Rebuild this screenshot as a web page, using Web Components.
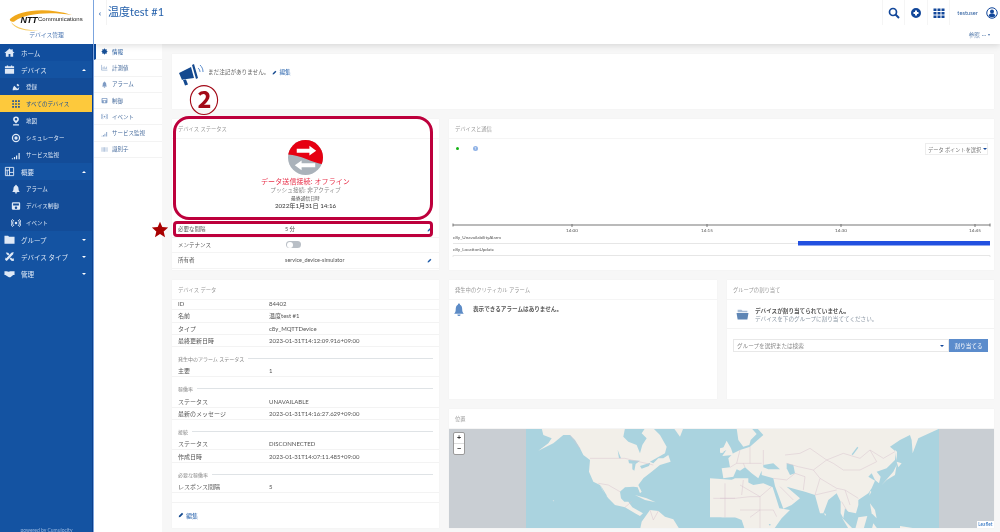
<!doctype html>
<html lang="ja">
  <head>
    <meta charset="UTF-8" />
    <title>デバイス管理</title>
    <style>
      html, body { margin: 0; height: 100%; overflow: hidden; background: #f7f7f7; }
      body { font-family: Lato, "Noto Sans CJK JP", sans-serif; color: #444; }
    </style>
  </head>
  <body>
    <device-page></device-page>
    <script>
      const ICONS = {
        home: '<path fill="currentColor" d="M12 3 1 13h3v8h6v-6h4v6h6v-8h3l-4-3.6V5h-3v1.7z"/>',
        device: '<path fill="currentColor" d="M6 3h3v2h6V3h3v2h4v4H2V5h4zM2 11h20v10H2z"/>',
        satellite: '<path fill="currentColor" d="M4 20c0-4 1-8 4-11l7 7c-3 3-7 4-11 4zM13 7l3-3 4 4-3 3zM10 20l8-1 2-7-3 3z"/>',
        grid: '<path fill="currentColor" d="M3 3h4v4H3zM10 3h4v4h-4zM17 3h4v4h-4zM3 10h4v4H3zM10 10h4v4h-4zM17 10h4v4h-4zM3 17h4v4H3zM10 17h4v4h-4zM17 17h4v4h-4z"/>',
        pin: '<path fill="currentColor" fill-rule="evenodd" d="M12 1a7 7 0 0 1 7 7c0 4-4 7-7 10-3-3-7-6-7-10a7 7 0 0 1 7-7zm0 4a3 3 0 1 0 0 6 3 3 0 0 0 0-6zM5 20h14v3H5z"/>',
        target: '<path fill="currentColor" fill-rule="evenodd" d="M12 2a10 10 0 1 1 0 20 10 10 0 0 1 0-20zm0 3a7 7 0 1 0 0 14 7 7 0 0 0 0-14zm0 3a4 4 0 1 1 0 8 4 4 0 0 1 0-8z"/>',
        signal: '<path fill="currentColor" d="M2 20h3v2H2zM7 17h3v5H7zM12 13h3v9h-3zM18 7h3v15h-3z"/>',
        panels: '<path fill="none" stroke="currentColor" stroke-width="2" d="M3 3h18v18H3zM3 9h9M12 3v18M12 14h9M7 9v12"/>',
        bell: '<path fill="currentColor" d="M12 2c1 0 2 1 2 2 3 1 4 4 4 7 0 4 1 6 3 8H3c2-2 3-4 3-8 0-3 1-6 4-7 0-1 1-2 2-2zM9 20h6a3 3 0 0 1-6 0z"/>',
        control: '<path fill="currentColor" fill-rule="evenodd" d="M5 3h14a3 3 0 0 1 3 3v12a3 3 0 0 1-3 3H5a3 3 0 0 1-3-3V6a3 3 0 0 1 3-3zm0 3v5h14V6zm7 7a3 3 0 1 0 0 6 3 3 0 0 0 0-6z"/>',
        event: '<path fill="none" stroke="currentColor" stroke-width="2.4" d="M7 5c-4 4-4 10 0 14M4 3c-5 5-5 13 0 18M17 5c4 4 4 10 0 14M20 3c5 5 5 13 0 18"/><circle cx="12" cy="12" r="3" fill="currentColor"/>',
        folder: '<path fill="currentColor" d="M1 4h8l2 2h12v15H1z"/>',
        tray: '<path fill="#a9bdd6" d="M3 3h7l2 2h9v3H3z"/><path fill="currentColor" d="M1 9h22l-2 12H3z"/>',
        tools: '<path fill="currentColor" d="M2 19 16 4l5-2-1 5L6 22zM4 3l5 1 3 3-3 3-3-3zM15 14l3 3 3-1 1 5-5 1-5-5zM3 14l2 2-2 2z"/>',
        hands: '<path fill="currentColor" d="M1 7h5l4 1 4-1 4 0h5v8h-3l-6 5c-2 1-3 0-5-1l-6-4H1z"/>',
        pencil: '<path fill="currentColor" d="M3 21l1-6L16 3l5 5L9 20z"/>',
        info: '<path fill="currentColor" d="M12 1l3 4 5-1-1 5 4 3-4 3 1 5-5-1-3 4-3-4-5 1 1-5-4-3 4-3-1-5 5 1z"/>',
        chart: '<path fill="none" stroke="currentColor" stroke-width="2" d="M2 3v18h20M7 17v-6M11 17V8M15 17v-4M19 17V9"/>',
        idlist: '<path fill="currentColor" d="M2 4h3v16H2zM7 4h2v16H7zM11 4h3v16h-3zM16 4h2v16h-2zM20 4h2v16h-2z" opacity=".7"/>',
      };

      // small base so each element only gives its css and markup
      class Box extends HTMLElement {
        connectedCallback() {
          if (this.shadowRoot) return;
          this.attachShadow({ mode: "open" });
          this.shadowRoot.innerHTML = `<style>${this.css()}</style>${this.markup()}`;
        }
        css() { return ":host{display:block}"; }
        markup() { return "<slot></slot>"; }
        attr(name, fallback = "") { return this.getAttribute(name) ?? fallback; }
      }

      class AppIcon extends Box {
        css() {
          return `:host{display:inline-flex;width:${this.attr("size", 10)}px;height:${this.attr("size", 10)}px;flex:none}
            svg{width:100%;height:100%;display:block}`;
        }
        markup() {
          return `<svg viewBox="0 0 24 24">${ICONS[this.attr("name")] || ""}</svg>`;
        }
      }

      class NavRow extends Box {
        css() {
          return `:host{display:flex;align-items:center;height:17px;box-sizing:border-box;color:#dfe9f6;background:#1453a2;
              padding-left:${this.hasAttribute("sub") ? 11 : 4}px;font-size:${this.hasAttribute("sub") ? 5.5 : 6.5}px}
            :host([sub]){background:#134c98}
            :host([first]){background:#114e9e}
            :host([active]){background:#fdc93c;color:#1a4f9a}
            app-icon{margin-right:${this.hasAttribute("sub") ? 5 : 6}px}
            span{flex:1;white-space:nowrap}
            i{font-style:normal;width:0;height:0;margin-right:6px;border-left:2px solid transparent;border-right:2px solid transparent}
            i.up{border-bottom:2px solid #fff}
            i.down{border-top:2px solid #fff}`;
        }
        markup() {
          const chev = this.attr("chev");
          const size = this.hasAttribute("sub") ? 10 : 11;
          return `<app-icon name="${this.attr("icon")}" size="${size}"></app-icon><span><slot></slot></span>${chev ? `<i class="${chev}"></i>` : ""}`;
        }
      }

      class SideNav extends Box {
        css() {
          return `:host{display:flex;flex-direction:column;width:94px;height:532px;flex:none;background:#1453a2;
              border-right:1px solid #7ba4de;box-sizing:border-box;position:relative;overflow:hidden;z-index:3}
            .brand{height:44px;background:#fff;display:flex;flex-direction:column;align-items:center}
            .logo{position:relative;width:76px;height:22px;margin-top:9px;left:-1px}
            .logo svg{position:absolute;inset:0;width:100%;height:100%;overflow:visible}
            .logo b{position:absolute;left:13px;top:5.5px;font:italic 900 9px "Liberation Sans",sans-serif;color:#111;letter-spacing:-.2px}
            .logo em{position:absolute;left:30.5px;top:7px;font:normal 6px "Liberation Sans",sans-serif;color:#222}
            .app{font-size:5.8px;color:#4d78b3;line-height:8px}
            nav{flex:1;border-right:1px solid #0b3f8c}
            .foot{position:absolute;left:0;right:0;top:527px;text-align:center;font-size:5px;color:#9dbbe3}`;
        }
        markup() {
          return `<div class="brand">
              <div class="logo">
                <svg viewBox="0 0 76 22"><path fill="#f0a81c" d="M2 10C10 2 36-3 64 6 40 2 16 5 7 12c-2 2-6 0-5-2z"/><path fill="#f6c95a" d="M3 13c6 7 20 9 30 8-12 2-26 0-30-8z"/></svg>
                <b>NTT</b><em>Communications</em>
              </div>
              <div class="app">デバイス管理</div>
            </div>
            <nav><slot></slot></nav>
            <div class="foot">powered by Cumulocity</div>`;
        }
      }

      class TabRow extends Box {
        css() {
          return `:host{display:flex;align-items:center;height:16.3px;box-sizing:border-box;padding-left:7px;gap:4px;font-size:5.5px;color:#4b6f9f;border-bottom:1px solid #f3f3f3}
            :host([active]){border-left:2px solid #0d4a9c;padding-left:5px;color:#174f96}
            app-icon{color:#7f9cc4}
            :host([active]) app-icon{color:#174f96}`;
        }
        markup() {
          return `<app-icon name="${this.attr("icon")}" size="7"></app-icon><slot></slot>`;
        }
      }

      class TopBar extends Box {
        css() {
          return `:host{display:block;background:#fff;box-shadow:0 2px 6px rgba(0,0,0,.12);position:relative;z-index:2}
            .bar{display:flex;align-items:center;height:25px;box-sizing:border-box}
            .back{width:12px;height:25px;display:flex;align-items:center;justify-content:center;border-right:1px solid #f3f3f3;font-size:8px;font-weight:700;color:#2a5fa8;box-sizing:content-box}
            h1{flex:1;margin:0 0 0 1px;font-size:11px;font-weight:400;color:#2460ab;white-space:nowrap;position:relative;top:-1.5px}
            .act{width:21.5px;height:25px;display:flex;align-items:center;justify-content:center;border-left:1px solid #f5f5f5;color:#12479a}
            .act svg{width:12px;height:12px}
            .user{font-size:5.8px;color:#2e5f9f;padding:0 6px 0 7px;border-left:1px solid #f5f5f5;height:25px;display:flex;align-items:center}
            .me{width:15px;height:25px;display:flex;align-items:center;color:#12479a;margin-right:1px}
            .me svg{width:12px;height:12px;margin-left:2px;flex:none}
            .sub{height:19px;display:flex;justify-content:flex-end;align-items:center;padding-right:10px;font-size:5.5px;color:#5a7fae;gap:2px}
            .sub i{border-top:2px solid #4a72a8;border-left:1.5px solid transparent;border-right:1.5px solid transparent}`;
        }
        markup() {
          return `<div class="bar">
              <div class="back">‹</div>
              <h1><slot></slot></h1>
              <div class="act"><svg viewBox="0 0 24 24"><circle cx="10" cy="10" r="7" fill="none" stroke="currentColor" stroke-width="3.4"/><path stroke="currentColor" stroke-width="4" d="m15 15 7 7"/></svg></div>
              <div class="act"><svg viewBox="0 0 24 24"><path fill="currentColor" fill-rule="evenodd" d="M12 2a10 10 0 1 1 0 20 10 10 0 0 1 0-20zm-2 5v3H7v4h3v3h4v-3h3v-4h-3V7z"/></svg></div>
              <div class="act"><svg viewBox="0 0 24 24"><path fill="currentColor" d="M1 3h6v5H1zM9 3h6v5H9zM17 3h6v5h-6zM1 10h6v5H1zM9 10h6v5H9zM17 10h6v5h-6zM1 17h6v5H1zM9 17h6v5H9zM17 17h6v5h-6z"/></svg></div>
              <div class="user">testuser</div>
              <div class="me"><svg viewBox="0 0 24 24"><circle cx="12" cy="12" r="10.5" fill="none" stroke="currentColor" stroke-width="2"/><circle cx="12" cy="9" r="4" fill="currentColor"/><path fill="currentColor" d="M5 18c1-4 4-5 7-5s6 1 7 5c-2 3-12 3-14 0z"/></svg></div>
            </div>
            <div class="sub">参照 <span>···</span><i></i></div>`;
        }
      }

      class DashCard extends Box {
        css() {
          return `:host{display:flex;flex-direction:column;background:#fff;min-width:0;overflow:hidden;box-shadow:0 0 1px rgba(0,0,0,.06)}
            header{height:20px;flex:none;display:flex;align-items:center;padding-left:6px;font-size:5.3px;color:#9a9a9a;border-bottom:1px solid #f5f5f5;box-sizing:border-box}
            .body{flex:1;display:flex;flex-direction:column;min-height:0;position:relative}`;
        }
        markup() {
          const t = this.attr("heading");
          return `${t ? `<header>${t}</header>` : ""}<div class="body"><slot></slot></div>`;
        }
      }

      class DataRow extends Box {
        css() {
          return `:host{display:grid;grid-template-columns:91px 1fr;height:12.3px;align-items:center;box-sizing:border-box;padding-left:6px;font-size:6px;color:#555;border-bottom:1px solid #f3f3f3;white-space:nowrap}`;
        }
        markup() {
          return `<span>${this.attr("label")}</span><span><slot></slot></span>`;
        }
      }

      class DataSection extends Box {
        css() {
          return `:host{display:flex;align-items:center;gap:4px;height:18px;box-sizing:border-box;padding:5px 6px 0 6px;font-size:5px;color:#888;white-space:nowrap}
            i{flex:1;height:1px;background:#dfe3e6}`;
        }
        markup() { return `<span><slot></slot></span><i></i>`; }
      }

      class DeviceStatus extends Box {
        css() {
          return `:host{display:flex;flex-direction:column;align-items:center;height:83px;text-align:center}
            svg{width:35px;height:35px;margin-top:1px}
            .a{font-size:7px;color:#e8314a;margin-top:1px;line-height:10px;letter-spacing:.1px}
            .b{font-size:5.7px;color:#888;line-height:8px}
            .c{font-size:4.8px;color:#555;line-height:7px;margin-top:.5px}
            .d{font-size:6.2px;color:#333;line-height:7px}`;
        }
        markup() {
          return `<svg viewBox="0 0 36 36">
              <defs><clipPath id="c"><circle cx="18" cy="18" r="18"/></clipPath></defs>
              <g clip-path="url(#c)">
                <rect width="36" height="36" fill="#aab2ba"/>
                <path fill="#e60012" d="M0 0h36v25C26 24 12 15 0 15z"/>
              </g>
              <path fill="#fff" d="M9 9h13V6l7 5-7 5v-3H9z"/>
              <path fill="#fff" d="M28 24H14v-3l-7 5 7 5v-3h14z"/>
            </svg>
            <div class="a">データ送信接続: オフライン</div>
            <div class="b">プッシュ接続: 非アクティブ</div>
            <div class="c">最終通信日時</div>
            <div class="d">2022年1月31日 14:16</div>`;
        }
      }

      class InfoRow extends Box {
        css() {
          return `:host{display:grid;grid-template-columns:107px 1fr 12px;align-items:center;height:15.5px;padding-left:6px;font-size:5.5px;color:#555;border-bottom:1px solid #f4f4f4;white-space:nowrap;box-sizing:border-box}
            app-icon{color:#1c5aa8}`;
        }
        markup() {
          return `<span>${this.attr("label")}</span><span><slot></slot></span>${this.hasAttribute("edit") ? '<app-icon name="pencil" size="5"></app-icon>' : ""}`;
        }
      }

      class ToggleOff extends Box {
        css() {
          return `:host{display:block;width:15px;height:7px;border-radius:4px;background:#b9bfc6;position:relative;margin-left:1px}
            i{position:absolute;left:.5px;top:.5px;width:6px;height:6px;border-radius:50%;background:#fff}`;
        }
        markup() { return "<i></i>"; }
      }

      class ChartPanel extends Box {
        css() {
          return `:host{display:flex;flex-direction:column;flex:1}
            .top{display:flex;align-items:flex-start;justify-content:space-between;padding:4px 6px 0 6px;height:21px;box-sizing:border-box}
            .legend{display:flex;align-items:center;gap:14px;padding-top:3px}
            .dot{width:3px;height:3px;background:#16b316;border-radius:50%;margin-left:1px}
            .help{width:5px;height:5px;border-radius:50%;background:#8fb2e6;color:#fff;font-size:4px;line-height:5px;text-align:center}
            .pick{display:flex;align-items:center;gap:2px;width:63px;height:12px;border:1px solid #ededed;box-sizing:border-box;font-size:5.2px;color:#777;padding-left:2px;white-space:nowrap}
            .pick i{border-top:2.5px solid #12479a;border-left:2px solid transparent;border-right:2px solid transparent}
            svg{display:block;width:545px;height:100px}
            text{font:4.6px Lato,"Liberation Sans",sans-serif;fill:#555}`;
        }
        markup() {
          const ticks = [[123, "14:00"], [258, "14:15"], [392, "14:30"], [526, "14:45"]];
          return `<div class="top"><div class="legend"><div class="dot"></div><div class="help">?</div></div>
              <div class="pick">データ ポイントを選択<i></i></div></div>
            <svg viewBox="0 0 545 100">
              <path stroke="#777" stroke-width="1.2" d="M4 65H541"/>
              <path stroke="#777" d="M4 63.500v3M541 63.500v3"/>
              ${ticks.map(([x, t]) => `<path stroke="#777" d="M${x} 64v3"/><text x="${x}" y="72" text-anchor="middle">${t}</text>`).join("")}
              <text x="4" y="79">c8y_UnavailabilityAlarm</text>
              <path stroke="#e6e6e6" d="M4 83.500H349"/>
              <rect x="349" y="81" width="192" height="4.5" fill="#2250e0"/>
              <text x="4" y="91">c8y_LocationUpdate</text>
              <path fill="none" stroke="#e6e6e6" d="M4 97V95.500H541V97"/>
            </svg>`;
        }
      }

      class WorldMap extends Box {
        css() {
          return `:host{display:block;flex:1;position:relative;overflow:hidden;background:#c9ced3}
            svg{position:absolute;left:0;top:0;width:545px;height:99px}
            .zoom{position:absolute;left:4px;top:3px;width:10px;border:1px solid #9a9a9a;border-radius:2px;background:#fff;font:700 7px/10px "Liberation Sans",sans-serif;text-align:center;color:#333}
            .zoom div{height:10px}
            .zoom div+div{border-top:1px solid #ddd}
            .att{position:absolute;right:0;bottom:0;background:#fff;padding:0 1.5px;font-size:4.8px;line-height:7px;color:#2a6fc0}`;
        }
        markup() {
          // land traced in two pieces, west part from x=525 and east part from x=730 (3x coords)
          return `<svg viewBox="449 429 545 99">
              <rect x="526" y="429" width="413" height="99" fill="#aad3df"/>
              <g transform="translate(525 430) scale(.3333)">
                <g fill="#f2efe9">
                  <path d="M50 -5 55 15 80 25 70 40 40 62 85 40 115 15 135 15 150 30 165 55 175 75 195 90 192 125 205 155 225 165 235 185 250 205 270 225 300 232 330 250 345 258 354 250 322 232 310 215 298 215 288 205 285 185 300 172 325 170 338 172 345 190 350 185 340 165 355 145 380 125 405 105 437 95 430 75 415 85 400 85 385 100 375 95 420 70 425 50 405 15 385 -5 360 -5 350 10 365 25 352 45 345 70 335 45 310 35 295 20 300 -5z"/>
                  <path d="M447 -5 475 -5 465 20z"/>
                  <path d="M330 195 365 205 392 217 360 210z"/>
                  <path d="M345 300 350 275 375 240 400 243 420 260 445 268 465 300z"/>
                  <path d="M587 70 605 32 618 55 625 75 592 78 604 60z"/>
                  <path d="M585 55 597 52 595 68 585 68z"/>
                  <path d="M630 145 600 160 565 205 565 235 590 262 670 262 670 145z"/>
                  <path d="M83 210 88 213 85 214z"/>
                </g>
                <g fill="#aad3df">
                  <path d="M310 90 345 92 332 102 312 100z"/>
                  <path d="M322 100 332 102 328 122 322 118z"/>
                  <path d="M345 108 376 98 372 108 350 116z"/>
                  <path d="M226 165 246 197 240 197z"/>
                  <path d="M278 60 288 85 282 85z"/>
                </g>
              </g>
              <g transform="translate(730 430) scale(.3333)">
                <g fill="#f2efe9">
                  <path d="M20 -5 25 30 40 50 58 45 62 30 80 12 65 -5z"/>
                  <path d="M82 -5 630 -5 565 25 548 70 545 30 540 15 510 30 480 50 498 65 495 90 470 115 440 125 452 140 447 160 435 150 425 130 415 140 435 152 425 175 415 190 385 210 385 225 378 250 355 245 345 235 340 265 332 250 332 215 320 190 295 210 280 250 270 250 255 195 225 185 205 180 170 170 210 205 185 225 160 236 135 168 130 145 95 135 95 122 85 145 65 130 45 112 30 122 20 118 10 140 -20 145 -25 115 0 112 -5 85 10 70 30 60 60 50 100 15z"/>
                  <path d="M15 150 40 150 70 165 100 160 128 172 148 235 180 240 155 265 130 300 45 300 35 270 15 262 -60 262 -60 145z"/>
                  <path d="M455 165 490 125 500 105 495 135 470 150z"/>
                  <path d="M500 95 515 100 505 112z"/>
                  <path d="M495 60 501 65 500 92z"/>
                  <path d="M420 183 424 185 418 197z"/>
                  <path d="M420 220 435 240 440 265 425 250z"/>
                  <path d="M385 262 412 258 400 300 375 300z"/>
                  <path d="M430 280 445 300 425 300z"/>
                  <path d="M335 262 372 300 358 300z"/>
                  <path d="M510 288 560 296 510 300z"/>
                  <path d="M0 135 8 130 8 140z"/>
                  <path d="M282 250 288 252 286 258z"/>
                </g>
                <g fill="#aad3df">
                  <path d="M100 105 130 100 150 118 115 118 100 112z"/>
                  <path d="M170 100 190 105 195 130 180 135 170 115z"/>
                  <path d="M382 50 385 53 368 76 365 73z"/>
                  <path d="M116 282 122 282 120 288z"/>
                </g>
                <g fill="none" stroke="#d9c5cf" stroke-width="1.5">
                  <path d="M165 75 210 70 240 55 290 90 340 70 390 85 420 60 460 85 495 65"/>
                  <path d="M290 90 310 100 340 120 390 120 440 95 420 60"/>
                  <path d="M170 100 205 110 250 120 290 90M195 130 225 140 220 180M250 120 270 145 255 195M270 145 320 175 345 180 385 205M255 195 320 180"/>
                  <path d="M345 180 360 225M335 215 350 240M150 170 190 210M130 145 170 150 195 130"/>
                  <path d="M30 165 90 200 125 170M-30 205 15 205 60 200 90 200 90 240 130 240 140 260M30 240 90 240 90 296M40 150 35 195M90 240 60 262"/>
                  <path d="M0 112 20 100 60 100 95 100M60 50 60 100M100 60 100 105M30 60 20 100M40 100 45 112"/>
                </g>
              </g>
              <g transform="translate(525 430) scale(.3333)" fill="none" stroke="#d9c5cf" stroke-width="1.500">
                <path d="M195 85 300 85 320 90 385 105M135 15 165 55M220 160 250 165 285 185M300 232 320 215M375 240 385 270 400 243M600 160 600 262M565 205 630 205"/>
              </g>
            </svg>
            <div class="zoom"><div>+</div><div>−</div></div>
            <div class="att">Leaflet</div>`;
        }
      }

      class MarkUp extends Box {
        css() {
          return `:host{display:block;position:absolute;inset:0;pointer-events:none;z-index:5}
            .r{position:absolute;box-sizing:border-box;border:3px solid #bd003c}
            .a{left:173px;top:116px;width:260px;height:104px;border-radius:16px}
            .b{left:173px;top:221px;width:260px;height:16px;border-radius:4px}
            .star{position:absolute;left:151px;top:221px;width:18px;height:17px}
            .num{position:absolute;left:186px;top:77px;width:36px;text-align:center;font:700 30px/42px "Noto Sans CJK JP",sans-serif;color:#a30a18}`;
        }
        markup() {
          return `<div class="r a"></div><div class="r b"></div>
            <svg class="star" viewBox="0 0 24 24"><path fill="#a80000" d="m12 1 3.2 7.6 8.3.7-6.3 5.4 1.9 8.1L12 18.5 4.900 22.800l1.900-8.100L.5 9.300l8.300-.7z"/></svg>
            <div class="num">②</div>`;
        }
      }

      class DevicePage extends Box {
        css() {
          return `:host{display:flex;width:1000px;height:532px;position:relative;overflow:hidden;background:#f7f7f7;filter:blur(.3px)}
            .right{flex:1;display:flex;flex-direction:column;min-width:0}
            .under{flex:1;display:flex;min-height:0}
            .tabs{width:68px;flex:none;background:#fff}
            main{flex:1;display:grid;grid-template-columns:267px 268px 267px;grid-template-rows:55px 151px 119px 119px;gap:10px;padding:10px 6px 0 10px;box-sizing:border-box;min-width:0;align-content:start}
            .wide{grid-column:1 / 4}
            .chart{grid-column:2 / 4}
            .data{grid-row:3 / 5}
            .loc{grid-column:2 / 4}
            .first{margin-top:-2px}
            .note{flex:1;display:flex;align-items:flex-start;padding:8px 0 0 6px;gap:4px;font-size:5.6px;color:#666}
            .note svg{width:26px;height:24px;color:#14498f;flex:none}
            .note .t{margin-top:6px;white-space:nowrap}
            .note .e{margin-top:6px;margin-left:-1px;color:#2460ab;display:flex;gap:2px;align-items:center;white-space:nowrap}
            .note app-icon,.edit app-icon{color:#14498f}
            .edit{margin-top:9px;border-top:1px solid #f3f3f3;padding:8px 0 0 6px;display:flex;gap:2px;align-items:center;font-size:6px;color:#2460ab}
            .empty{display:flex;gap:7px;padding:2px 0 0 4px;font-size:5.6px;font-weight:700;color:#555;align-items:flex-start}
            .empty svg{width:13px;height:15px;color:#5c8bc6;flex:none}
            .empty span{margin-top:3px;white-space:nowrap}
            .assign{display:flex;gap:6px;align-items:center;padding:1px 0 0 9px;height:29px;box-sizing:border-box;border-bottom:1px solid #f3f3f3;flex:none}
            .assign app-icon{color:#5f86b5}
            .assign p{margin:0;font-size:5.6px;line-height:8px;color:#8a96a3;white-space:nowrap}
            .assign b{display:block;color:#555}
            .pickrow{display:flex;margin:10px 6px 0 6px;height:13px}
            .select{flex:1;border:1px solid #e8e8e8;box-sizing:border-box;display:flex;align-items:center;justify-content:space-between;padding:0 4px 0 3px;font-size:5.6px;color:#888;white-space:nowrap}
            .select i{border-top:2.5px solid #12479a;border-left:2px solid transparent;border-right:2px solid transparent}
            .btn{width:39px;background:#5b8ccc;color:#fff;font-size:5.6px;display:flex;align-items:center;justify-content:center;white-space:nowrap}`;
        }
        markup() {
          return `<side-nav>
              <nav-row icon="home" first>ホーム</nav-row>
              <nav-row icon="device" chev="up">デバイス</nav-row>
              <nav-row icon="satellite" sub>登録</nav-row>
              <nav-row icon="grid" sub active>すべてのデバイス</nav-row>
              <nav-row icon="pin" sub>地図</nav-row>
              <nav-row icon="target" sub>シミュレーター</nav-row>
              <nav-row icon="signal" sub>サービス監視</nav-row>
              <nav-row icon="panels" chev="up">概要</nav-row>
              <nav-row icon="bell" sub>アラーム</nav-row>
              <nav-row icon="control" sub>デバイス制御</nav-row>
              <nav-row icon="event" sub>イベント</nav-row>
              <nav-row icon="folder" chev="down">グループ</nav-row>
              <nav-row icon="tools" chev="down">デバイス タイプ</nav-row>
              <nav-row icon="hands" chev="down">管理</nav-row>
            </side-nav>
            <div class="right">
              <top-bar>温度test #1</top-bar>
              <div class="under">
                <div class="tabs">
                  <tab-row icon="info" active>情報</tab-row>
                  <tab-row icon="chart">計測値</tab-row>
                  <tab-row icon="bell">アラーム</tab-row>
                  <tab-row icon="control">制御</tab-row>
                  <tab-row icon="event">イベント</tab-row>
                  <tab-row icon="signal">サービス監視</tab-row>
                  <tab-row icon="idlist">識別子</tab-row>
                </div>
                <main>
                  <dash-card class="wide">
                    <div class="note">
                      <svg viewBox="0 0 26 24"><path fill="currentColor" d="M1 11 13 5l3 11-11 1.500-1 .5zM5 18l3-.5 2 5-3 1zM14 3l2-1 4 14-2 1z"/><path fill="none" stroke="#5b8ccc" d="M20 6c1.500 1 2 3 2 4M22 3c2 2 3 4 3 7"/></svg>
                      <span class="t">まだ注記がありません。</span>
                      <span class="e"><app-icon name="pencil" size="5"></app-icon>編集</span>
                    </div>
                  </dash-card>
                  <dash-card heading="デバイス ステータス">
                    <device-status></device-status>
                    <info-row label="必要な間隔" edit>5 分</info-row>
                    <info-row label="メンテナンス"><toggle-off></toggle-off></info-row>
                    <info-row label="所有者" edit>service_device-simulator</info-row>
                  </dash-card>
                  <dash-card class="chart" heading="デバイスと通信"><chart-panel></chart-panel></dash-card>
                  <dash-card class="data" heading="デバイス データ">
                    <data-row class="first" label="ID">84402</data-row>
                    <data-row label="名前">温度test #1</data-row>
                    <data-row label="タイプ">c8y_MQTTDevice</data-row>
                    <data-row label="最終更新日時">2023-01-31T14:12:09.916+09:00</data-row>
                    <data-section>発生中のアラーム ステータス</data-section>
                    <data-row label="主要">1</data-row>
                    <data-section>稼働率</data-section>
                    <data-row label="ステータス">UNAVAILABLE</data-row>
                    <data-row label="最新のメッセージ">2023-01-31T14:16:27.629+09:00</data-row>
                    <data-section>接続</data-section>
                    <data-row label="ステータス">DISCONNECTED</data-row>
                    <data-row label="作成日時">2023-01-31T14:07:11.485+09:00</data-row>
                    <data-section>必要な稼働率</data-section>
                    <data-row label="レスポンス間隔">5</data-row>
                    <div class="edit"><app-icon name="pencil" size="6"></app-icon>編集</div>
                  </dash-card>
                  <dash-card heading="発生中のクリティカル アラーム">
                    <div class="empty">
                      <svg viewBox="0 0 24 24"><path fill="currentColor" d="M11 1c1 0 2 1 2 2 3 1 4 5 4 9 0 4 1 6 3 8H2c2-2 3-4 3-8 0-4 1-8 4-9 0-1 1-2 2-2zM8 21h6a3 3 0 0 1-6 0z"/></svg>
                      <span>表示できるアラームはありません。</span>
                    </div>
                  </dash-card>
                  <dash-card heading="グループの割り当て">
                    <div class="assign">
                      <app-icon name="tray" size="13"></app-icon>
                      <p><b>デバイスが割り当てられていません。</b>デバイスを下のグループに割り当ててください。</p>
                    </div>
                    <div class="pickrow">
                      <div class="select">グループを選択または検索<i></i></div>
                      <div class="btn">割り当てる</div>
                    </div>
                  </dash-card>
                  <dash-card class="loc" heading="位置"><world-map></world-map></dash-card>
                </main>
              </div>
            </div>
            <mark-up></mark-up>`;
        }
      }

      customElements.define("app-icon", AppIcon);
      customElements.define("nav-row", NavRow);
      customElements.define("side-nav", SideNav);
      customElements.define("tab-row", TabRow);
      customElements.define("top-bar", TopBar);
      customElements.define("dash-card", DashCard);
      customElements.define("data-row", DataRow);
      customElements.define("data-section", DataSection);
      customElements.define("device-status", DeviceStatus);
      customElements.define("info-row", InfoRow);
      customElements.define("toggle-off", ToggleOff);
      customElements.define("chart-panel", ChartPanel);
      customElements.define("world-map", WorldMap);
      customElements.define("mark-up", MarkUp);
      customElements.define("device-page", DevicePage);
    </script>
  </body>
</html>
